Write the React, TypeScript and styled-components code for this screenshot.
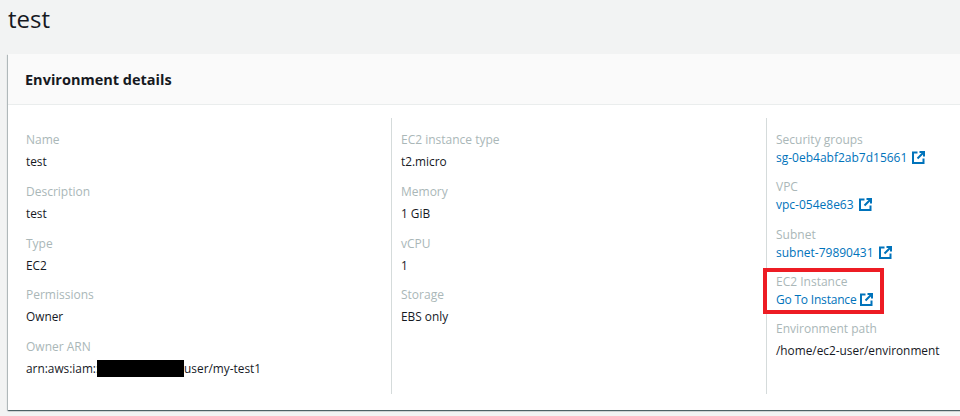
import styled, { createGlobalStyle } from "styled-components";

const GlobalStyle = createGlobalStyle`
  html, body {
    margin: 0;
    padding: 0;
    background: #f2f3f3;
    font-family: "Open Sans", "Noto Sans", sans-serif;
  }
`;

const Page = styled.div`
  width: 960px;
  height: 416px;
  overflow: hidden;
  box-sizing: border-box;
  padding: 0 0 0 8px;
`;

const Title = styled.h1`
  margin: 0;
  height: 54px;
  font-size: 24px;
  line-height: 38px;
  font-weight: 400;
  color: #16191f;
`;

const Card = styled.section`
  width: 960px;
  height: 356px;
  background: #fff;
  box-shadow: 0 1px 1px 0 rgba(0, 28, 36, 0.5), 1px 1px 1px 0 rgba(0, 28, 36, 0.2),
    -1px 1px 1px 0 rgba(0, 28, 36, 0.2);
`;

const CardHeader = styled.header`
  height: 51px;
  box-sizing: border-box;
  padding: 0 17px;
  display: flex;
  align-items: center;
  background: #fafafa;
  border-bottom: 1px solid #eaeded;
  font-size: 14.5px;
  font-weight: 700;
  color: #16191f;
`;

const Columns = styled.div`
  display: grid;
  grid-template-columns: 375px 375px 1fr;
  padding: 13px 0 0 9px;
`;

const Column = styled.div<{ $last?: boolean }>`
  height: 276px;
  box-sizing: border-box;
  padding: 13px 0 0 9px;
  border-right: ${(p) => (p.$last ? "none" : "1px solid #d5dbdb")};
  display: flex;
  flex-direction: column;
  align-items: flex-start;
  gap: ${(p) => (p.$last ? "12.3px" : "12.8px")};
`;

const Field = styled.div`
  position: relative;
  display: flex;
  flex-direction: column;
`;

const Label = styled.div`
  font-size: 12px;
  line-height: 17px;
  color: #aab7b8;
`;

const Value = styled.div`
  margin-top: 4px;
  font-size: 11.85px;
  line-height: 18px;
  color: #16191f;
  white-space: nowrap;
  display: flex;
  align-items: center;
`;

const Redaction = styled.span`
  display: inline-block;
  width: 87px;
  height: 17px;
  margin-left: -2px;
  background: #000;
`;

const ExternalLink = styled.a<{ $tight?: boolean }>`
  margin-top: 1px;
  font-size: 12px;
  line-height: 17px;
  letter-spacing: ${(p) => (p.$tight ? "-0.2px" : "0")};
  color: #0073bb;
  display: flex;
  align-items: center;
  gap: ${(p) => (p.$tight ? "4px" : "5px")};
  white-space: nowrap;
`;

const Highlight = styled.div`
  position: absolute;
  left: -13px;
  top: -5px;
  width: 121px;
  height: 46px;
  box-sizing: border-box;
  border: 4px solid #ed1c24;
`;

function ExternalIcon() {
  return (
    <svg width="13" height="13" viewBox="0 0 13 13" fill="none" stroke="#0073bb" strokeWidth="2">
      <path d="M5.5 1.5H1v10.500h10.500V7.500" />
      <path d="M7.500 1H12v4.500M12 1 5.500 7.500" />
    </svg>
  );
}

function Item({ label, value }: { label: string; value: React.ReactNode }) {
  return (
    <Field>
      <Label>{label}</Label>
      <Value>{value}</Value>
    </Field>
  );
}

function LinkItem({ label, href }: { label: string; href: string }) {
  return (
    <Field>
      <Label>{label}</Label>
      <ExternalLink>
        {href}
        <ExternalIcon />
      </ExternalLink>
    </Field>
  );
}

export default function App() {
  return (
    <Page>
      <GlobalStyle />
      <Title>test</Title>
      <Card>
        <CardHeader>Environment details</CardHeader>
        <Columns>
          <Column>
            <Item label="Name" value="test" />
            <Item label="Description" value="test" />
            <Item label="Type" value="EC2" />
            <Item label="Permissions" value="Owner" />
            <Item
              label="Owner ARN"
              value={
                <>
                  arn:aws:iam::
                  <Redaction />
                  user/my-test1
                </>
              }
            />
          </Column>
          <Column>
            <Item label="EC2 instance type" value="t2.micro" />
            <Item label="Memory" value="1 GiB" />
            <Item label="vCPU" value="1" />
            <Item label="Storage" value="EBS only" />
          </Column>
          <Column $last>
            <LinkItem label="Security groups" href="sg-0eb4abf2ab7d15661" />
            <LinkItem label="VPC" href="vpc-054e8e63" />
            <LinkItem label="Subnet" href="subnet-79890431" />
            <Field>
              <Label>EC2 Instance</Label>
              <ExternalLink $tight>
                Go To Instance
                <ExternalIcon />
              </ExternalLink>
              <Highlight />
            </Field>
            <Item label="Environment path" value="/home/ec2-user/environment" />
          </Column>
        </Columns>
      </Card>
    </Page>
  );
}
